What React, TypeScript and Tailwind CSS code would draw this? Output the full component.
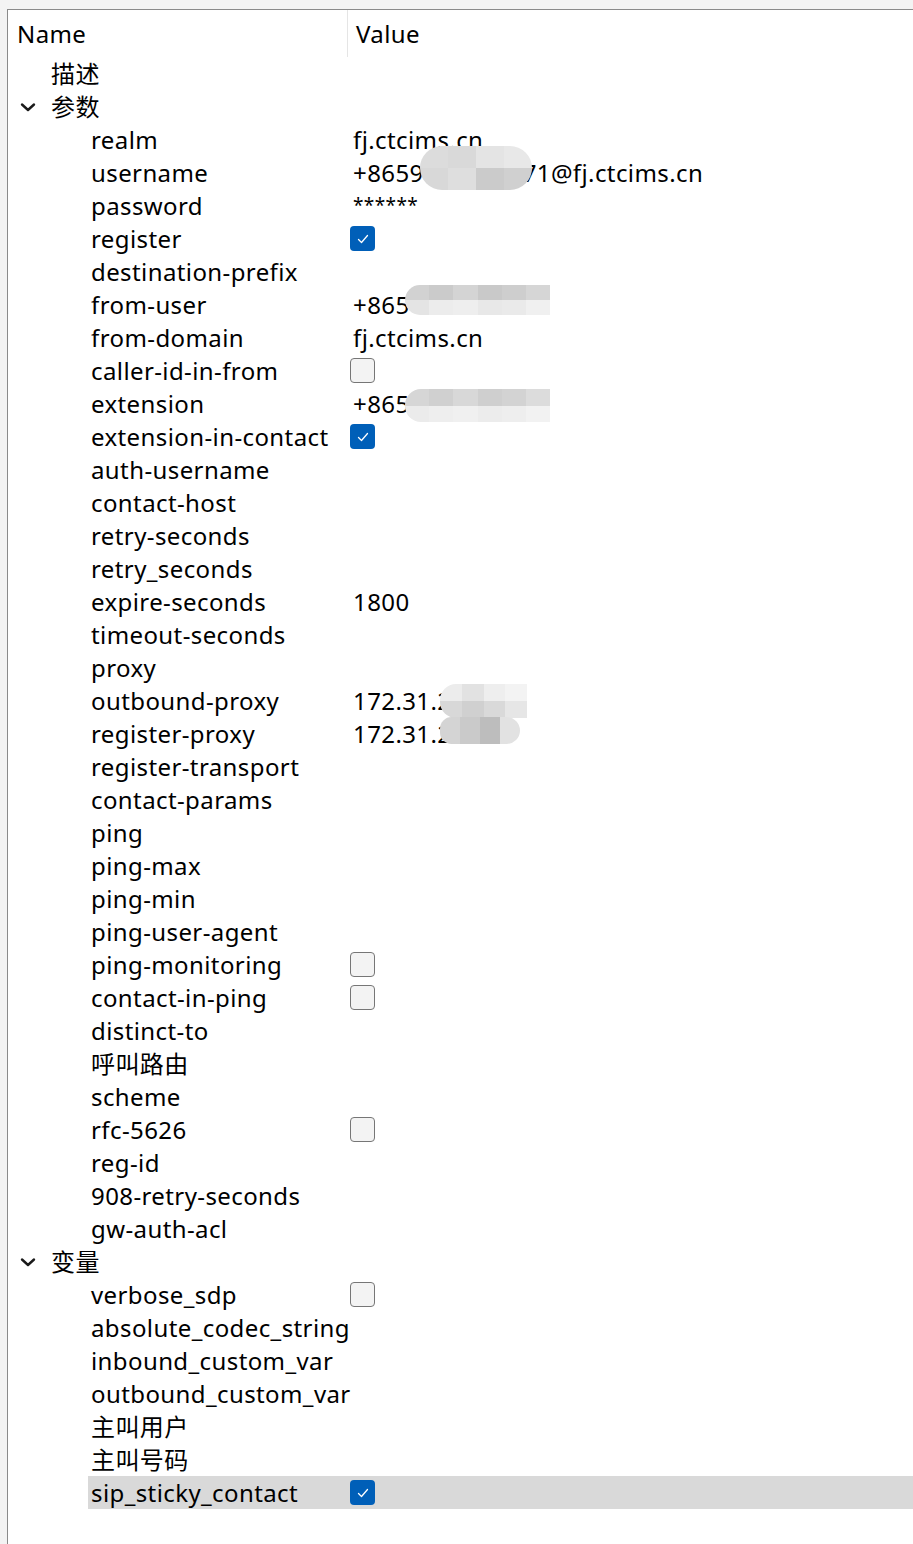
import React from "react";

type Row = {
  name: string;
  level: 1 | 2;
  expander?: boolean;
  value?: string;
  check?: boolean;
  blob?: "username" | "from-user" | "extension" | "outbound" | "register";
  selected?: boolean;
};

const rows: Row[] = [
  { name: "描述", level: 1 },
  { name: "参数", level: 1, expander: true },
  { name: "realm", level: 2, value: "fj.ctcims.cn" },
  { name: "username", level: 2, blob: "username" },
  { name: "password", level: 2, value: "******" },
  { name: "register", level: 2, check: true },
  { name: "destination-prefix", level: 2 },
  { name: "from-user", level: 2, value: "+865", blob: "from-user" },
  { name: "from-domain", level: 2, value: "fj.ctcims.cn" },
  { name: "caller-id-in-from", level: 2, check: false },
  { name: "extension", level: 2, value: "+865", blob: "extension" },
  { name: "extension-in-contact", level: 2, check: true },
  { name: "auth-username", level: 2 },
  { name: "contact-host", level: 2 },
  { name: "retry-seconds", level: 2 },
  { name: "retry_seconds", level: 2 },
  { name: "expire-seconds", level: 2, value: "1800" },
  { name: "timeout-seconds", level: 2 },
  { name: "proxy", level: 2 },
  { name: "outbound-proxy", level: 2, value: "172.31.2", blob: "outbound" },
  { name: "register-proxy", level: 2, value: "172.31.2", blob: "register" },
  { name: "register-transport", level: 2 },
  { name: "contact-params", level: 2 },
  { name: "ping", level: 2 },
  { name: "ping-max", level: 2 },
  { name: "ping-min", level: 2 },
  { name: "ping-user-agent", level: 2 },
  { name: "ping-monitoring", level: 2, check: false },
  { name: "contact-in-ping", level: 2, check: false },
  { name: "distinct-to", level: 2 },
  { name: "呼叫路由", level: 2 },
  { name: "scheme", level: 2 },
  { name: "rfc-5626", level: 2, check: false },
  { name: "reg-id", level: 2 },
  { name: "908-retry-seconds", level: 2 },
  { name: "gw-auth-acl", level: 2 },
  { name: "变量", level: 1, expander: true },
  { name: "verbose_sdp", level: 2, check: false },
  { name: "absolute_codec_string", level: 2 },
  { name: "inbound_custom_var", level: 2 },
  { name: "outbound_custom_var", level: 2 },
  { name: "主叫用户", level: 2 },
  { name: "主叫号码", level: 2 },
  { name: "sip_sticky_contact", level: 2, check: true, selected: true },
];

// pixelated blur patches over the hidden numbers
const Mosaic = ({ cells, className }: { cells: string[][]; className: string }) => (
  <div className={"absolute flex flex-col overflow-hidden " + className}>
    {cells.map((r, i) => (
      <div key={i} className="flex flex-1">
        {r.map((c, j) => (
          <div key={j} className="flex-1" style={{ background: c }} />
        ))}
      </div>
    ))}
  </div>
);

const Blob = ({ kind }: { kind: Row["blob"] }) => {
  if (kind === "username")
    return (
      <Mosaic
        className="left-[72px] top-[-10px] w-[112px] h-[44px] rounded-[22px]"
        cells={[
          ["#dcdcdc", "#d9d9d9", "#e4e4e4", "#e8e8e8"],
          ["#d8d8d8", "#dedede", "#cbcbcb", "#d0d0d0"],
        ]}
      />
    );
  if (kind === "from-user")
    return (
      <Mosaic
        className="left-[57px] top-[-3px] w-[145px] h-[30px] rounded-l-[15px]"
        cells={[
          ["#d2d2d2", "#cbcbcb", "#d4d4d4", "#c9c9c9", "#cecece", "#d6d6d6"],
          ["#e4e4e4", "#ececec", "#eeeeee", "#e8e8e8", "#eaeaea", "#f0f0f0"],
        ]}
      />
    );
  if (kind === "extension")
    return (
      <Mosaic
        className="left-[57px] top-[2px] w-[145px] h-[33px] rounded-l-[16px]"
        cells={[
          ["#d6d6d6", "#d0d0d0", "#d8d8d8", "#cfcfcf", "#d3d3d3", "#dcdcdc"],
          ["#ebebeb", "#eeeeee", "#f0f0f0", "#ececec", "#eeeeee", "#f2f2f2"],
        ]}
      />
    );
  if (kind === "outbound")
    return (
      <Mosaic
        className="left-[92px] top-[0px] w-[87px] h-[34px] rounded-l-[16px]"
        cells={[
          ["#ececec", "#e2e2e2", "#eeeeee", "#f3f3f3"],
          ["#d8d8d8", "#d0d0d0", "#d9d9d9", "#e6e6e6"],
        ]}
      />
    );
  return (
    <Mosaic
      className="left-[92px] top-[0px] w-[80px] h-[27px] rounded-r-[14px] rounded-l-[12px]"
      cells={[["#d4d4d4", "#cacaca", "#bdbdbd", "#e2e2e2"]]}
    />
  );
};

const Checkbox = ({ checked }: { checked: boolean }) =>
  checked ? (
    <div className="w-[25px] h-[25px] rounded-[4px] bg-[#005fb8] flex items-center justify-center">
      <svg width="14" height="14" viewBox="0 0 14 14" fill="none">
        <path d="M2.5 7.5l3 3 6-7" stroke="#fff" strokeWidth="1.3" strokeLinecap="round" strokeLinejoin="round" />
      </svg>
    </div>
  ) : (
    <div className="w-[25px] h-[25px] rounded-[4px] bg-[#f3f3f3] border border-[#767676]" />
  );

const Chevron = () => (
  <svg width="16" height="16" viewBox="0 0 16 16" fill="none">
    <path d="M2 5.5l6 5.5 6-5.5" stroke="#1a1a1a" strokeWidth="2.4" strokeLinecap="round" strokeLinejoin="round" />
  </svg>
);

const TreeRow = ({ row }: { row: Row }) => {
  const indent = row.level === 1 ? "w-[40px]" : "w-[80px]";
  const nameW = row.level === 1 ? "w-[300px]" : "w-[260px]";
  return (
    <div className="flex h-[33px]">
      <div className={indent + " shrink-0 flex items-center pl-[12px]"}>{row.expander && <Chevron />}</div>
      <div className={"flex flex-1 items-center " + (row.selected ? "bg-[#d9d9d9]" : "")}>
        <div className={nameW + " shrink-0 pl-[3px] whitespace-nowrap"}>{row.name}</div>
        <div className="relative flex-1 h-full flex items-center">
          {row.check !== undefined && (
            <div className="pl-[2px]">
              <Checkbox checked={row.check} />
            </div>
          )}
          {row.blob === "username" ? (
            <span className="pl-[5px] whitespace-nowrap">
              +8659<span className="inline-block w-[99px]" />71@fj.ctcims.cn
            </span>
          ) : row.value === "******" ? (
            <span className="pl-[5px] whitespace-nowrap text-[19px] self-start pt-[2px]">{row.value}</span>
          ) : (
            row.value && <span className="pl-[5px] whitespace-nowrap">{row.value}</span>
          )}
          {row.blob && <Blob kind={row.blob} />}
        </div>
      </div>
    </div>
  );
};

export default function App() {
  return (
    <div
      className="min-h-screen bg-[#f3f3f3] pt-[9px] pl-[7px] text-[24px] tracking-[0.4px] text-black overflow-hidden"
      style={{ fontFamily: '"Noto Sans", "Noto Sans CJK SC", sans-serif' }}
    >
      <div className="bg-white border-t border-l border-[#8a8a8a] h-[1535px]">
        <div className="flex h-[47px]">
          <div className="w-[340px] pl-[9px] flex items-center border-r border-[#e5e5e5]">Name</div>
          <div className="pl-[8px] flex items-center">Value</div>
        </div>
        {rows.map((r, i) => (
          <TreeRow key={i} row={r} />
        ))}
      </div>
    </div>
  );
}
